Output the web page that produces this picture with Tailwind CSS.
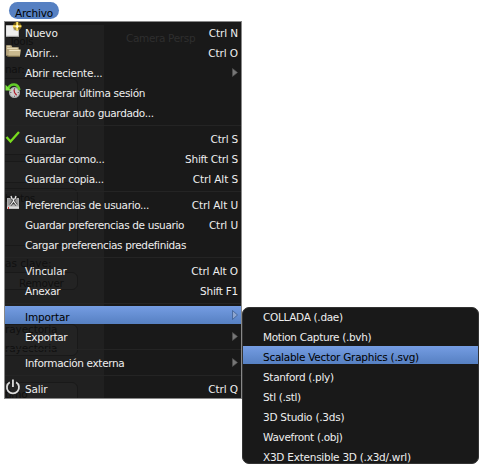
<!DOCTYPE html>
<html lang="es">
<head>
<meta charset="utf-8">
<title>Archivo</title>
<script src="https://cdn.jsdelivr.net/npm/@tailwindcss/browser@4"></script>
</head>
<body class="relative h-[468px] w-[482px] overflow-hidden bg-white font-['DejaVu_Sans',sans-serif] text-[10.5px] leading-5 tracking-[-0.35px] text-[#eee]">
<div class="ml-[9px] flex h-[21px] pt-[2px]"><div class="h-[17px] w-[50px] rounded-full bg-[#5680c2] text-center leading-[22px] tracking-[-0.15px] text-black">Archivo</div></div>
<nav class="relative ml-1 h-[378px] w-[238px] border border-[#888] bg-[#191919]">
  <div class="absolute inset-0 overflow-hidden text-[#101010]" aria-hidden="true">
    <div class="absolute left-0 top-[3px] h-[374px] w-[99px] bg-[#202020]"></div>
    <div class="absolute left-[-9px] top-[56px] h-[77px] w-[82px] rounded-md border border-[#191919] bg-[#222]"></div>
    <div class="absolute left-[-9px] top-[139px] h-[22px] w-[82px] rounded-md border border-[#191919] bg-[#222]"></div>
    <div class="absolute left-[-9px] top-[166px] h-[58px] w-[82px] rounded-md border border-[#191919]"></div>
    <div class="absolute left-[-9px] top-[250px] h-[18px] w-[82px] rounded-md border border-[#191919] bg-[#232323]"></div>
    <div class="absolute left-[-9px] top-[302px] h-[32px] w-[82px] rounded-md border border-[#191919] bg-[#232323]"></div>
    <div class="absolute left-[-9px] top-[360px] h-[25px] w-[82px] rounded-md border border-[#191919] bg-[#232323]"></div>
    <div class="absolute left-1 top-[9px]">Tools</div>
    <div class="absolute left-0 top-[37px]">nar:</div>
    <div class="absolute left-0 top-[166px]">bjetos</div>
    <div class="absolute left-0 top-[231px] tracking-normal">as clave:</div>
    <div class="absolute left-[14px] top-[251px]">Remover</div>
    <div class="absolute left-0 top-[297px] tracking-[-0.1px]">rayectoria</div>
    <div class="absolute left-0 top-[316px] tracking-[-0.1px]">rayectoria</div>
    <div class="absolute left-0 top-[362px]">timo</div>
    <div class="absolute left-[121px] top-[6px] text-[#2e2e2e]">Camera Persp</div>
  </div>
  <div class="relative flex flex-col">
    <div class="flex h-5 items-center pt-0.5 pr-[3px]"><span class="flex w-5 shrink-0">
      <svg width="18" height="18" viewBox="0 0 17 17" class="-mt-[6px]"><path d="M1 4h8l4 4v7H1z" fill="#eee"/><path d="M1 14h12v1H1z" fill="#999"/><path d="M8 5v4h5" fill="#bbb"/><circle cx="11.5" cy="5" r="4" fill="#977516" opacity=".7"/><path d="M11.5 1v8M7.5 5h8" stroke="#ffe25c" stroke-width="1.8"/><path d="M10 5h3M11.5 3.500v3" stroke="#fff"/></svg></span><span class="tracking-[-0.2px]">Nuevo</span><span class="ml-auto tracking-[-0.1px]">Ctrl N</span></div>
    <div class="flex h-5 items-center pt-0.5 pr-[3px]"><span class="flex w-5 shrink-0">
      <svg width="18" height="18" viewBox="0 0 17 17" class="-mt-[5px]"><path d="M1 3h5l1 2h6v8H1z" fill="#b8a67d"/><path d="M2 4h3M2 6h10" stroke="#e4d9b6"/><path d="M4 7h11l-1 7H3z" fill="#c9b98e"/><path d="M4 8h10" stroke="#f0e6c6"/><path d="M2 13.500h12" stroke="#756845"/></svg></span><span class="tracking-[-0.15px]">Abrir...</span><span class="ml-auto tracking-[-0.1px]">Ctrl O</span></div>
    <div class="flex h-5 items-center pt-0.5 pr-[3px] pl-5"><span class="tracking-[-0.25px]">Abrir reciente...</span><svg class="-mt-0.5 ml-auto" width="6" height="9" viewBox="0 0 6 9"><path d="M.5.5v8L5.500 4.500z" fill="#777" stroke="#555" stroke-width=".6"/></svg></div>
    <div class="flex h-5 items-center pt-0.5"><span class="flex w-5 shrink-0">
      <svg width="18" height="18" viewBox="0 0 17 17" class="-mt-[5px]" fill="none"><circle cx="9" cy="10" r="4.700" fill="#ccc" stroke="#aaa"/><path d="M9 6v1M5 10h1M9 13v1M12 10h1" stroke="#555"/><path d="M8.500 7l.5 3 2 2.500" stroke="#b11f2c" stroke-width="1.200"/><path d="M3 6C5.500.8 12.500 1 13.500 7.500" stroke="#62cc29" stroke-width="2.500"/><path d="M.5 2.500V8H6z" fill="#7de53e"/></svg></span><span class="tracking-[-0.31px]">Recuperar última sesión</span></div>
    <div class="flex h-5 items-center pt-0.5 pl-5"><span>Recuerar auto guardado...</span></div>
    <div class="flex h-1.5 items-center"><div class="h-px w-full bg-[#242424]"></div></div>
    <div class="flex h-5 items-center pt-0.5 pr-[3px]"><span class="flex w-5 shrink-0">
      <svg width="17" height="17" viewBox="0 0 17 17" class="-mt-[5px]"><path d="M1.500 9l4 4.500L14 4" fill="none" stroke="#78dc1e" stroke-width="2.300"/></svg></span><span>Guardar</span><span class="ml-auto tracking-[-0.2px]">Ctrl S</span></div>
    <div class="flex h-5 items-center pt-0.5 pr-[3px] pl-5"><span>Guardar como...</span><span class="ml-auto tracking-[-0.25px]">Shift Ctrl S</span></div>
    <div class="flex h-5 items-center pt-0.5 pr-[3px] pl-5"><span>Guardar copia...</span><span class="ml-auto tracking-[-0.1px]">Ctrl Alt S</span></div>
    <div class="flex h-1.5 items-center"><div class="h-px w-full bg-[#242424]"></div></div>
    <div class="flex h-5 items-center pt-0.5 pr-[3px]"><span class="flex w-5 shrink-0">
      <svg width="17" height="17" viewBox="0 0 17 17" class="-mt-[6px]"><path d="M2 4h12v11H2z" fill="#aaa"/><path d="M3 5h10v6H3z" fill="#999"/><path d="M2 13.500h12" stroke="#ddd" stroke-width="2"/><path d="M6 2l1 3h3l1-3M8.500 5v3M8.500 7l-3 4M8.500 7l3 4" stroke="#333" stroke-width="2.600" fill="none"/><path d="M6 2l1 3h3l1-3M8.500 5v3M8.500 7l-3 4M8.500 7l3 4" stroke="#eee" stroke-width="1.200" fill="none"/><path d="M3 13h1v2H3z" fill="#d33"/></svg></span><span>Preferencias de usuario...</span><span class="ml-auto tracking-[-0.1px]">Ctrl Alt U</span></div>
    <div class="flex h-5 items-center pt-0.5 pr-[3px] pl-5"><span>Guardar preferencias de usuario</span><span class="ml-auto tracking-[-0.1px]">Ctrl U</span></div>
    <div class="flex h-5 items-center pt-0.5 pl-5"><span>Cargar preferencias predefinidas</span></div>
    <div class="flex h-1.5 items-center"><div class="h-px w-full bg-[#242424]"></div></div>
    <div class="flex h-5 items-center pt-0.5 pr-[3px] pl-5"><span class="tracking-[-0.12px]">Vincular</span><span class="ml-auto tracking-[-0.1px]">Ctrl Alt O</span></div>
    <div class="flex h-5 items-center pt-0.5 pr-[3px] pl-5"><span class="tracking-[-0.3px]">Anexar</span><span class="ml-auto tracking-[-0.25px]">Shift F1</span></div>
    <div class="flex h-1.5 items-center"><div class="h-px w-full bg-[#242424]"></div></div>
    <div class="mb-0.5 flex h-[18px] items-center bg-linear-to-b from-[#759de3] to-[#5680c2] pr-[3px] pl-5 text-black"><span class="pt-1 tracking-[-0.15px]">Importar</span><svg class="ml-auto" width="6" height="10" viewBox="0 0 6 10"><path d="M.5.5v9L5.500 5z" fill="#8fa6cf" stroke="#3e5e92" stroke-width=".8"/></svg></div>
    <div class="flex h-5 items-center pt-0.5 pr-[3px] pl-5"><span>Exportar</span><svg class="-mt-0.5 ml-auto" width="6" height="9" viewBox="0 0 6 9"><path d="M.5.5v8L5.500 4.500z" fill="#777" stroke="#555" stroke-width=".6"/></svg></div>
    <div class="flex h-1.5 items-center"><div class="h-px w-full bg-[#242424]"></div></div>
    <div class="flex h-5 items-center pt-0.5 pr-[3px] pl-5"><span>Información externa</span><svg class="-mt-0.5 ml-auto" width="6" height="9" viewBox="0 0 6 9"><path d="M.5.5v8L5.500 4.500z" fill="#777" stroke="#555" stroke-width=".6"/></svg></div>
    <div class="flex h-1.5 items-center"><div class="h-px w-full bg-[#242424]"></div></div>
    <div class="flex h-5 items-center pt-0.5 pr-[3px]"><span class="flex w-5 shrink-0">
      <svg width="18" height="18" viewBox="0 0 17 17" class="-mt-[5px]" fill="none" stroke="#ddd" stroke-width="1.700"><path d="M4.500 4a5.700 5.700 0 1 0 6 0M7.500 1.500v7"/></svg></span><span class="tracking-[-0.15px]">Salir</span><span class="ml-auto tracking-[-0.1px]">Ctrl Q</span></div>
  </div>
</nav>
<nav class="absolute left-[242px] top-[307px] flex h-[157px] w-[237px] flex-col overflow-hidden rounded-[7px] border border-[#333] bg-[#191919] leading-[22px] tracking-[-0.32px]">
  <div class="h-[18px] shrink-0 pl-5 leading-[18px]">COLLADA (.dae)</div>
  <div class="h-5 shrink-0 pl-5">Motion Capture (.bvh)</div>
  <div class="mb-0.5 h-[18px] shrink-0 bg-linear-to-b from-[#759de3] to-[#5680c2] pl-5 tracking-[-0.26px] text-black">Scalable Vector Graphics (.svg)</div>
  <div class="h-5 shrink-0 pl-5">Stanford (.ply)</div>
  <div class="h-5 shrink-0 pl-5">Stl (.stl)</div>
  <div class="h-5 shrink-0 pl-5 tracking-[-0.25px]">3D Studio (.3ds)</div>
  <div class="h-5 shrink-0 pl-5">Wavefront (.obj)</div>
  <div class="h-5 shrink-0 pl-5 tracking-[-0.25px]">X3D Extensible 3D (.x3d/.wrl)</div>
</nav>
</body>
</html>
